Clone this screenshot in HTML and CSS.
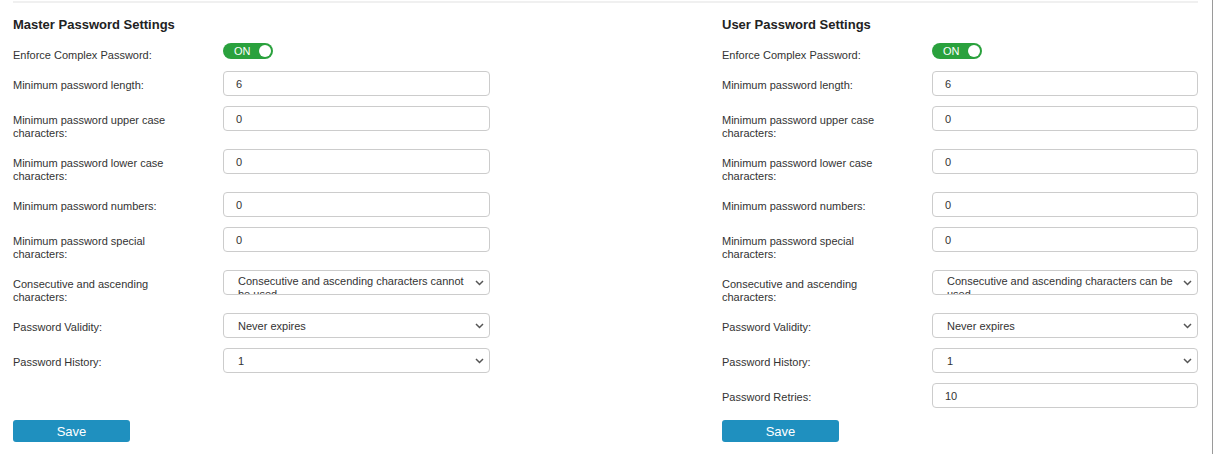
FILE: index.html
```html
<!DOCTYPE html>
<html lang="en">
<head>
<meta charset="utf-8">
<title>Password Settings</title>
<link rel="stylesheet" href="styles.css">
</head>
<body>
<div class="page">
  <div class="panel">
    <section class="col">
      <h2 class="title">Master Password Settings</h2>
      <div class="row toggle-row">
        <div class="lbl">Enforce Complex Password:</div>
        <div class="ctrl"><span class="toggle"><span class="toggle-text">ON</span><span class="knob"></span></span></div>
      </div>
      <div class="row">
        <div class="lbl">Minimum password length:</div>
        <div class="ctrl"><div class="input">6</div></div>
      </div>
      <div class="row">
        <div class="lbl">Minimum password upper case characters:</div>
        <div class="ctrl"><div class="input">0</div></div>
      </div>
      <div class="row">
        <div class="lbl">Minimum password lower case characters:</div>
        <div class="ctrl"><div class="input">0</div></div>
      </div>
      <div class="row">
        <div class="lbl">Minimum password numbers:</div>
        <div class="ctrl"><div class="input">0</div></div>
      </div>
      <div class="row">
        <div class="lbl">Minimum password special characters:</div>
        <div class="ctrl"><div class="input">0</div></div>
      </div>
      <div class="row">
        <div class="lbl">Consecutive and ascending characters:</div>
        <div class="ctrl"><div class="select"><span class="select-text wrap">Consecutive and ascending characters cannot be used</span><svg class="chev" width="9" height="6" viewBox="0 0 9 6"><path d="M1 1 L4.5 4.5 L8 1" fill="none" stroke="#555" stroke-width="1.5"/></svg></div></div>
      </div>
      <div class="row">
        <div class="lbl">Password Validity:</div>
        <div class="ctrl"><div class="select"><span class="select-text">Never expires</span><svg class="chev" width="9" height="6" viewBox="0 0 9 6"><path d="M1 1 L4.5 4.5 L8 1" fill="none" stroke="#555" stroke-width="1.5"/></svg></div></div>
      </div>
      <div class="row">
        <div class="lbl">Password History:</div>
        <div class="ctrl"><div class="select"><span class="select-text">1</span><svg class="chev" width="9" height="6" viewBox="0 0 9 6"><path d="M1 1 L4.5 4.5 L8 1" fill="none" stroke="#555" stroke-width="1.5"/></svg></div></div>
      </div>
      <div class="actions"><button class="save" type="button">Save</button></div>
    </section>

    <section class="col">
      <h2 class="title">User Password Settings</h2>
      <div class="row toggle-row">
        <div class="lbl">Enforce Complex Password:</div>
        <div class="ctrl"><span class="toggle"><span class="toggle-text">ON</span><span class="knob"></span></span></div>
      </div>
      <div class="row">
        <div class="lbl">Minimum password length:</div>
        <div class="ctrl"><div class="input">6</div></div>
      </div>
      <div class="row">
        <div class="lbl">Minimum password upper case characters:</div>
        <div class="ctrl"><div class="input">0</div></div>
      </div>
      <div class="row">
        <div class="lbl">Minimum password lower case characters:</div>
        <div class="ctrl"><div class="input">0</div></div>
      </div>
      <div class="row">
        <div class="lbl">Minimum password numbers:</div>
        <div class="ctrl"><div class="input">0</div></div>
      </div>
      <div class="row">
        <div class="lbl">Minimum password special characters:</div>
        <div class="ctrl"><div class="input">0</div></div>
      </div>
      <div class="row">
        <div class="lbl">Consecutive and ascending characters:</div>
        <div class="ctrl"><div class="select"><span class="select-text wrap">Consecutive and ascending characters can be used</span><svg class="chev" width="9" height="6" viewBox="0 0 9 6"><path d="M1 1 L4.5 4.5 L8 1" fill="none" stroke="#555" stroke-width="1.5"/></svg></div></div>
      </div>
      <div class="row">
        <div class="lbl">Password Validity:</div>
        <div class="ctrl"><div class="select"><span class="select-text">Never expires</span><svg class="chev" width="9" height="6" viewBox="0 0 9 6"><path d="M1 1 L4.5 4.5 L8 1" fill="none" stroke="#555" stroke-width="1.5"/></svg></div></div>
      </div>
      <div class="row">
        <div class="lbl">Password History:</div>
        <div class="ctrl"><div class="select"><span class="select-text">1</span><svg class="chev" width="9" height="6" viewBox="0 0 9 6"><path d="M1 1 L4.5 4.5 L8 1" fill="none" stroke="#555" stroke-width="1.5"/></svg></div></div>
      </div>
      <div class="row">
        <div class="lbl">Password Retries:</div>
        <div class="ctrl"><div class="input">10</div></div>
      </div>
      <div class="actions"><button class="save" type="button">Save</button></div>
    </section>
  </div>
</div>
</body>
</html>
```

FILE: styles.css
```css
html, body {
  margin: 0;
  padding: 0;
  background: #ffffff;
}

body {
  font-family: "Liberation Sans", Arial, sans-serif;
  font-size: 11px;
  color: #333333;
}

.page {
  width: 1213px;
  height: 454px;
  box-sizing: border-box;
  border-right: 1px solid #9a9a9a;
  padding-top: 1px;
}

.panel {
  margin-left: 13px;
  width: 1185px;
  border-top: 2px solid #f0f0f0;
  display: grid;
  grid-template-columns: 477px 476px;
  justify-content: space-between;
}

.col {
  display: flex;
  flex-direction: column;
}

.title {
  margin: 14px 0 8px 0;
  font-size: 13px;
  line-height: 16px;
  font-weight: bold;
  color: #222222;
}

.row {
  display: flex;
  align-items: flex-start;
  margin-bottom: 10px;
}

.lbl {
  width: 170px;
  margin-right: 40px;
  padding-top: 8px;
  margin-bottom: -1px;
  line-height: 13px;
  color: #333333;
}

.ctrl {
  flex: 1;
}

.toggle-row .ctrl {
  padding-top: 2px;
}

.toggle {
  display: flex;
  align-items: center;
  justify-content: space-between;
  box-sizing: border-box;
  width: 50px;
  height: 16px;
  border-radius: 8px;
  background: #2aa13d;
  padding: 0 2px 0 11px;
}

.toggle-text {
  color: #ffffff;
  font-size: 11px;
  line-height: 16px;
}

.knob {
  width: 12px;
  height: 12px;
  border-radius: 50%;
  background: #ffffff;
}

.input {
  box-sizing: border-box;
  height: 25px;
  border: 1px solid #cccccc;
  border-radius: 4px;
  padding-left: 12px;
  padding-top: 1px;
  line-height: 23px;
  color: #333333;
}

.select {
  box-sizing: border-box;
  height: 25px;
  border: 1px solid #cccccc;
  border-radius: 4px;
  padding: 0 5px 0 14px;
  display: flex;
  align-items: center;
  justify-content: space-between;
  overflow: hidden;
  color: #333333;
}

.select-text {
  width: 230px;
  line-height: 13px;
  padding-top: 1px;
}

.select-text.wrap {
  align-self: stretch;
  padding-top: 4px;
  overflow: hidden;
}

.chev {
  flex: none;
  display: block;
}

.actions {
  margin-top: auto;
  padding-top: 2px;
  padding-bottom: 11px;
}

.save {
  display: block;
  width: 117px;
  height: 22px;
  border: none;
  border-radius: 3px;
  background: #1f90bf;
  color: #ffffff;
  font-family: "Liberation Sans", Arial, sans-serif;
  font-size: 13px;
  padding: 1px 0 0 0;
  cursor: pointer;
}
```
